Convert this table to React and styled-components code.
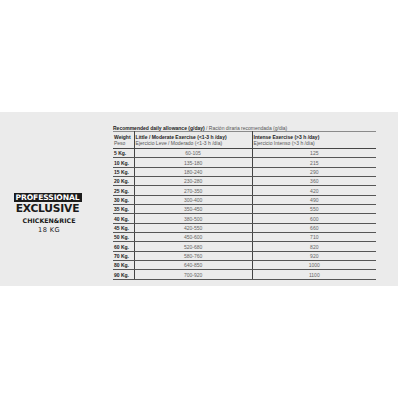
import styled, { createGlobalStyle } from "styled-components";

const GlobalStyle = createGlobalStyle`
  html, body {
    margin: 0;
    padding: 0;
    background: #ffffff;
  }
  body {
    font-family: "Liberation Sans Narrow", "Liberation Sans", Arial, sans-serif;
  }
`;

const Page = styled.div`
  width: 400px;
  height: 400px;
  padding-top: 112px;
  box-sizing: border-box;
`;

const Band = styled.div`
  width: 398px;
  height: 174px;
  background: #ebebeb;
  display: flex;
  align-items: flex-start;
`;

const Brand = styled.div`
  width: 95px;
  padding-top: 81px;
  display: flex;
  flex-direction: column;
  align-items: center;
  font-family: "DejaVu Sans", "Liberation Sans", sans-serif;
  color: #1a1a1a;
`;

const Badge = styled.div`
  background: #1c1c1c;
  color: #ffffff;
  font-weight: 700;
  font-size: 7.6px;
  line-height: 9px;
  padding: 0 2px;
  letter-spacing: -0.1px;
`;

const BrandLine = styled.div`
  font-weight: ${(p) => (p.$bold ? 700 : 400)};
  font-size: ${(p) => p.$size}px;
  line-height: ${(p) => p.$lh}px;
  letter-spacing: ${(p) => p.$ls || 0}px;
  margin-left: ${(p) => p.$shift || 0}px;
`;

const TableWrap = styled.div`
  margin-left: 18px;
  padding-top: 13px;
  width: 263px;
`;

const Caption = styled.div`
  font-size: 5px;
  line-height: 6px;
  color: #555;
  white-space: nowrap;
  b {
    color: #222;
  }
`;

const Table = styled.table`
  width: 100%;
  border-collapse: collapse;
  border-top: 1.5px solid #8a8a8a;
  font-size: 5px;
  color: #333;
`;

const Th = styled.th`
  text-align: left;
  vertical-align: top;
  font-weight: 400;
  height: 17px;
  padding: 2px 3px 0 1px;
  border-bottom: 1.2px solid #444;
  border-left: ${(p) => (p.$first ? "none" : "1px solid #444")};
  width: ${(p) => p.$w || "auto"};
  line-height: 6px;
  box-sizing: border-box;
  b {
    display: block;
    color: #222;
    font-weight: 700;
  }
  span {
    display: block;
    color: #555;
  }
`;

const Td = styled.td`
  height: 9.35px;
  padding: 0 1px;
  line-height: 8px;
  border-bottom: 1.2px solid #555;
  border-left: ${(p) => (p.$first ? "none" : "1px solid #444")};
  text-align: ${(p) => (p.$first ? "left" : "center")};
  font-weight: ${(p) => (p.$first ? 700 : 400)};
  color: ${(p) => (p.$first ? "#222" : "#666")};
  box-sizing: border-box;
`;

const rows = [
  ["5 Kg.", "60-105", "125"],
  ["10 Kg.", "135-180", "215"],
  ["15 Kg.", "180-240", "290"],
  ["20 Kg.", "230-280", "360"],
  ["25 Kg.", "270-350", "420"],
  ["30 Kg.", "300-400", "490"],
  ["35 Kg.", "350-450", "550"],
  ["40 Kg.", "380-500", "600"],
  ["45 Kg.", "420-550", "660"],
  ["50 Kg.", "450-600", "710"],
  ["60 Kg.", "520-680", "820"],
  ["70 Kg.", "580-760", "920"],
  ["80 Kg.", "640-850", "1000"],
  ["90 Kg.", "700-920", "1100"],
];

export default function App() {
  return (
    <Page>
      <GlobalStyle />
      <Band>
        <Brand>
          <Badge>PROFESSIONAL</Badge>
          <BrandLine $bold $size={10.7} $lh={14} $ls={-0.2}>
            EXCLUSIVE
          </BrandLine>
          <BrandLine $bold $size={6.3} $lh={9} $shift={3}>
            CHICKEN&amp;RICE
          </BrandLine>
          <BrandLine $size={6.6} $lh={10} $ls={0.4} $shift={3}>
            18 KG
          </BrandLine>
        </Brand>
        <TableWrap>
          <Caption>
            <b>Recommended daily allowance (g/day)</b> / Ración diraria recomendada (g/dia)
          </Caption>
          <Table>
            <thead>
              <tr>
                <Th $first $w="21px">
                  <b>Weight</b>
                  <span>Peso</span>
                </Th>
                <Th $w="118px">
                  <b>Little / Moderate Exercise (&lt;1-3 h /day)</b>
                  <span>Ejercicio Leve / Moderado (&lt;1-3 h /día)</span>
                </Th>
                <Th>
                  <b>Intense Exercise (&gt;3 h /day)</b>
                  <span>Ejercicio Intenso (&gt;3 h /día)</span>
                </Th>
              </tr>
            </thead>
            <tbody>
              {rows.map(([w, a, b]) => (
                <tr key={w}>
                  <Td $first>{w}</Td>
                  <Td>{a}</Td>
                  <Td>{b}</Td>
                </tr>
              ))}
            </tbody>
          </Table>
        </TableWrap>
      </Band>
    </Page>
  );
}
